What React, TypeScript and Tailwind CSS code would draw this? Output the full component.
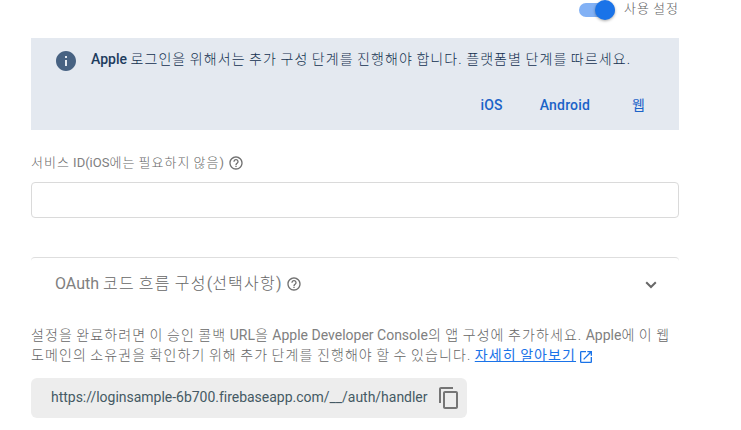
import type { ReactNode } from "react";
import { MdContentCopy, MdHelpOutline, MdInfo, MdOpenInNew } from "react-icons/md";

// Hangul runs are set lighter and slightly wider than the Latin text around them.
function Ko({ children, className = "" }: { children: ReactNode; className?: string }) {
  return <span className={`font-light tracking-[0.078em] [word-spacing:-0.078em] ${className}`}>{children}</span>;
}

function EnableToggle() {
  return (
    <div className="flex h-[38px] w-[648px] items-start justify-end">
      <button role="switch" aria-checked="true" aria-label="사용 설정" className="mt-[3px] flex h-3.5 w-9 items-center justify-end rounded-full bg-[#82b1f5]">
        <span className="size-5 shrink-0 rounded-full bg-[#1a73e8] shadow-[0_1px_3px_rgba(0,0,0,0.35)]" />
      </button>
      <span className="ml-[9px] whitespace-nowrap text-[13px] leading-[18px] text-[#616161]">
        <Ko>사용 설정</Ko>
      </span>
    </div>
  );
}

function Notice() {
  return (
    <section className="h-[92px] w-[648px] bg-[#e4e9f0] text-[#1d3c5e]">
      <div className="flex h-[42px] items-center pl-[23px]">
        <MdInfo className="mt-1 size-6 shrink-0 text-[#476282]" />
        <p className="ml-[13px] whitespace-nowrap text-[14px] leading-5">
          <span className="font-medium">Apple</span>{" "}
          <Ko className="text-[#12304f]">로그인을 위해서는 추가 구성 단계를 진행해야 합니다. 플랫폼별 단계를 따르세요.</Ko>
        </p>
      </div>
      <nav className="flex h-[50px] items-center justify-end pr-[34px] text-[14px] font-medium text-[#1b63c8]">
        <a className="mr-[37px] tracking-[0.2px]">iOS</a>
        <a className="mr-[42px] tracking-[0.2px]">Android</a>
        <a className="font-normal">웹</a>
      </nav>
    </section>
  );
}

export default function App() {
  return (
    <main className="h-[430px] w-[741px] overflow-hidden bg-white pl-[31px] font-[Roboto,'Noto_Sans_CJK_KR',sans-serif] text-[#808080]">
      <EnableToggle />
      <Notice />
      <label className="mt-[23px] flex h-5 items-center whitespace-nowrap text-[13px] leading-5">
        <span>
          <Ko className="text-[#666]">서비스 </Ko>ID(iOS<Ko className="text-[#666]">에는 필요하지 않음</Ko>)
        </span>
        <MdHelpOutline className="ml-1 size-4 text-[#707070]" />
      </label>
      <input aria-label="서비스 ID" className="mt-[9px] block h-9 w-[648px] rounded border border-[#dadada] outline-none" />
      <section className="mt-[39px] flex h-[53px] w-[648px] items-center rounded-t border-t border-[#dedede] px-6 text-[16px]">
        <h2 className="whitespace-nowrap">
          OAuth <Ko className="text-[#666]">코드 흐름 구성</Ko>(<Ko className="text-[#666]">선택사항</Ko>)
        </h2>
        <MdHelpOutline className="ml-1 size-4 text-[#707070]" />
        <svg viewBox="0 0 12 8" className="ml-auto mr-[-2px] mt-0.5 h-2 w-3 fill-none stroke-[#686868] stroke-2">
          <path d="M1.2 1.2 6 6l4.8-4.8" />
        </svg>
      </section>
      <p className="mt-[15px] whitespace-nowrap text-[14px] leading-5">
        <Ko className="text-[#666]">설정을 완료하려면 이 승인 콜백 </Ko>URL<Ko className="text-[#666]">을 </Ko>Apple Developer Console
        <Ko className="text-[#666]">의 앱 구성에 추가하세요. </Ko>Apple<Ko className="text-[#666]">에 이 웹</Ko>
        <br />
        <Ko className="text-[#666]">도메인의 소유권을 확인하기 위해 추가 단계를 진행해야 할 수 있습니다. </Ko>
        <a className="text-[#1a73e8] underline">
          <Ko className="font-normal">자세히 알아보기</Ko>
        </a>
        <MdOpenInNew className="ml-0.5 mt-0.5 inline size-4 text-[#1a73e8]" />
      </p>
      <div className="mt-[13px] flex h-10 w-[436px] items-center rounded-md bg-[#ededed] pl-5 text-[14px] text-[#455a64]">
        <span className="mb-px tracking-[-0.02px]">https://loginsample-6b700.firebaseapp.com/__/auth/handler</span>
        <MdContentCopy className="ml-auto mr-[6px] size-6 text-[#757575]" />
      </div>
    </main>
  );
}
